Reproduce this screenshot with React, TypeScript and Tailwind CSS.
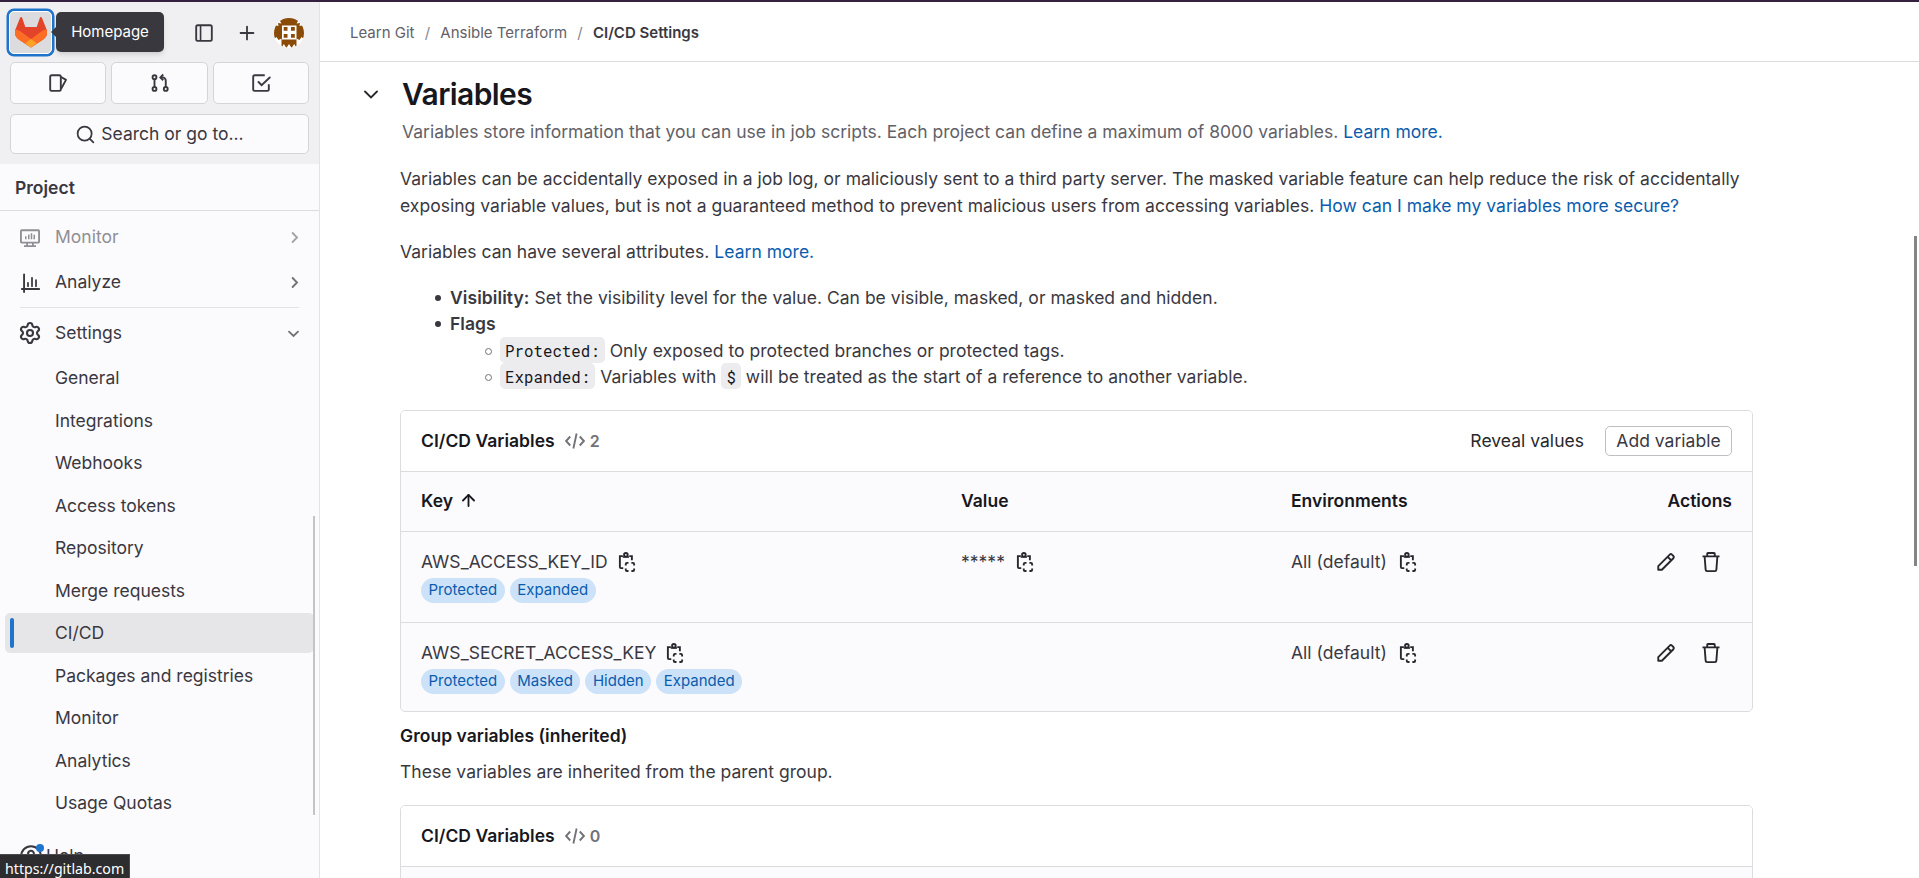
import React from "react";
import { ArrowUp, Plus, Search, Settings } from "lucide-react";

type IconProps = { className?: string; size?: number; children?: React.ReactNode };

function Icon({ className = "", size = 20, children }: IconProps) {
  return (
    <svg
      width={size}
      height={size}
      viewBox="0 0 16 16"
      fill="none"
      stroke="currentColor"
      strokeWidth="1.5"
      className={`block shrink-0 ${className}`}
    >
      {children}
    </svg>
  );
}

const ChevronDown = ({ className, size }: IconProps) => (
  <Icon className={className} size={size}>
    <path d="M3.2 6 8 10.7 12.8 6" strokeLinecap="round" />
  </Icon>
);

const SmallChevronDown = ({ className }: IconProps) => (
  <Icon className={className} size={15}>
    <path d="M3.2 6 8 10.7 12.8 6" strokeLinecap="round" strokeWidth="2" />
  </Icon>
);

const SmallChevronRight = ({ className }: IconProps) => (
  <Icon className={className} size={15}>
    <path d="M6 3.2 10.7 8 6 12.8" strokeLinecap="round" strokeWidth="2" />
  </Icon>
);

const SidebarIcon = () => (
  <Icon>
    <rect x="1.75" y="1.75" width="12.5" height="12.5" rx="1.25" />
    <path d="M5.25 2v12" strokeWidth="1.3" />
  </Icon>
);

const IssuesIcon = () => (
  <Icon>
    <rect x="1.75" y="1.75" width="8.5" height="12.5" rx="1.25" />
    <path d="M10.5 3.2 14.4 5.5 10.5 12.6" strokeLinejoin="round" />
  </Icon>
);

const MergeRequestIcon = () => (
  <Icon className="ml-[2px]">
    <circle cx="3.6" cy="3.3" r="1.55" />
    <circle cx="3.6" cy="12.7" r="1.55" />
    <circle cx="12.6" cy="12.7" r="1.55" />
    <path d="M3.6 5v6M12.6 11V6a2.5 2.5 0 0 0-2.5-2.5H8.8" />
    <path d="M10.6 1.2 8.3 3.5l2.3 2.3" />
  </Icon>
);

const TodoIcon = () => (
  <Icon>
    <path d="M11 1.75H3A1.25 1.25 0 0 0 1.75 3v10c0 .7.56 1.25 1.25 1.25h10c.7 0 1.25-.56 1.25-1.25V9" />
    <path d="m6 7.2 2.5 2.6L15 3.6" strokeLinecap="round" />
  </Icon>
);

const MonitorIcon = () => (
  <Icon>
    <rect x="0.75" y="1.75" width="14.5" height="9.9" rx="0.6" />
    <path d="M5.7 11.5v3M10.3 11.5v3M3.2 14.4h9.6" strokeWidth="1.4" />
    <path d="M4.6 6.6V9M7 5.2V9M9.2 4.2V9M11.4 5.4V9" strokeWidth="1.2" />
  </Icon>
);

const ChartIcon = () => (
  <Icon>
    <path d="M3.25 1.2v14M1.5 12.8h13.8" strokeLinecap="round" />
    <path d="M6.4 7.8v2.7M9.6 3.8v6.7M12.8 5.6v4.9" strokeLinecap="round" strokeWidth="1.4" />
  </Icon>
);

const CopyIcon = () => (
  <Icon className="relative -top-px text-[#28272d]">
    <path d="M5 12.9H3.2a.9.9 0 0 1-.9-.9V3.3h2.4M9.800 3.300h2.100V6.500" />
    <circle cx="7.1" cy="2.2" r="1.45" />
    <path d="M4.6 4h5" strokeWidth="1.3" />
    <path d="M9.200 8.700H8A1 1 0 0 0 7 9.700v1.100M11.500 8.700h1.200a1 1 0 0 1 1 1v1.100M7 13.100v1.100a1 1 0 0 0 1 1h1.200M11.500 15.200h1.200a1 1 0 0 0 1-1v-1.100" />
  </Icon>
);

const PencilIcon = () => (
  <Icon className="relative -top-px">
    <path
      d="M1.8 14.2v-2.9L11 2.1a1.3 1.3 0 0 1 1.8 0l1.1 1.1a1.3 1.3 0 0 1 0 1.8l-9.2 9.2zM9.4 3.9l2.7 2.7"
      strokeLinejoin="round"
    />
  </Icon>
);

const TrashIcon = () => (
  <Icon className="relative -top-px">
    <path d="M1.2 3.5h13.6M5 3.3V1.4c0-.4.2-.65.6-.65h4.8c.4 0 .6.25.6.65v1.9M2.9 3.6l.8 10.5c.05.7.5 1.15 1.2 1.15h6.2c.7 0 1.15-.45 1.2-1.15l.8-10.5" />
  </Icon>
);

const CodeIcon = () => (
  <Icon className="text-[#737278]">
    <path d="M4.2 4.4.9 8l3.3 3.6M11.8 4.4 15.1 8l-3.3 3.6M9.3 2 6.7 14" />
  </Icon>
);

const HelpIcon = () => (
  <Icon size={22}>
    <circle cx="8" cy="8" r="7.1" />
    <path d="M5.9 6.5A2.1 2.1 0 1 1 8 8.4v1.2" strokeLinecap="round" />
  </Icon>
);

function Tanuki() {
  return (
    <svg width="32" height="31" viewBox="0 0 32 31" className="block">
      <path
        d="M31.5 12.2 26.9.8a1.1 1.1 0 0 0-2.1.1L21.7 10H10.3L7.2.9A1.1 1.1 0 0 0 5.1.8L.5 12.2a8.6 8.6 0 0 0 2.9 10L16 30.5l12.6-8.3a8.6 8.6 0 0 0 2.9-10z"
        fill="#e24329"
      />
      <path
        d="M31.5 12.2a13 13 0 0 0-5.6 2.5L16 22.1l-9.9-7.4a13 13 0 0 0-5.6-2.5 8.6 8.6 0 0 0 2.9 10L16 30.5l12.6-8.3a8.6 8.6 0 0 0 2.9-10z"
        fill="#fc6d26"
      />
      <path d="m16 22.1-5.6 4.2 5.6 4.2 5.6-4.2z" fill="#fca326" />
    </svg>
  );
}

function Avatar() {
  return (
    <svg width="30" height="30" viewBox="0 0 30 30" className="block shrink-0">
      <clipPath id="avatar-clip">
        <circle cx="15" cy="15" r="15" />
      </clipPath>
      <g clipPath="url(#avatar-clip)">
        <rect width="30" height="30" fill="#fff" />
        <path
          d="M6 0h18v3l-1.500 2.500 3.500-.5-.5 3L30 7v14l-2.500-2-2 3-3-1.500V30l-2.300-4-2.600 4-2.600-4-2.600 4-2.600-4L7.500 30v-9.500l-3 1.500-2-3L0 21V7l4.500 1L4 5l3.500.5L6 3z"
          fill="#8a4b08"
        />
        <rect x="8" y="7.5" width="14.5" height="14" fill="#fff" />
        <path d="M9.7 9h3.8v3.8H9.7zM17 9h3.8v3.8H17zM9.7 16h3.8v3.8H9.7zM17 16h3.8v3.8H17z" fill="#8a4b08" />
      </g>
    </svg>
  );
}

const settingsItems = [
  "General",
  "Integrations",
  "Webhooks",
  "Access tokens",
  "Repository",
  "Merge requests",
  "CI/CD",
  "Packages and registries",
  "Monitor",
  "Analytics",
  "Usage Quotas",
];

const shortcutClass =
  "flex flex-1 items-center justify-center rounded-[5px] border border-[#d5d5d9] bg-[#fbfafd]";

function Sidebar() {
  return (
    <aside className="relative flex w-[320px] shrink-0 flex-col border-r border-[#e3e3e6] bg-[#fbfafd] text-[#3a383f]">
      <div className="h-[162px] shrink-0 bg-[#f0f0f3]">
        <div className="flex h-[60px] items-center pl-[9px] pr-[15px]">
          <div className="relative flex h-[43px] w-[43px] items-center justify-center rounded-[5px] border border-white bg-[#dcdcde] ring-[2.5px] ring-[#1f75cb]">
            <Tanuki />
            <div className="absolute left-[46px] top-0 z-10 flex h-10 w-[108px] items-center justify-center rounded-[5px] bg-[#3a383f] pt-px text-[15px] text-white shadow-md">
              <span className="absolute -left-[5px] top-[15px] border-y-[5px] border-r-[5px] border-y-transparent border-r-[#3a383f]" />
              Homepage
            </div>
          </div>
          <div className="ml-auto flex items-center pt-[1px]">
            <SidebarIcon />
            <Plus size={22} strokeWidth={2} className="ml-[22px] mr-[16px]" />
            <Avatar />
          </div>
        </div>
        <div className="flex h-[42px] gap-[5px] pl-[10px] pr-[10px]">
          <div className={shortcutClass}>
            <IssuesIcon />
          </div>
          <div className={shortcutClass}>
            <MergeRequestIcon />
          </div>
          <div className={shortcutClass}>
            <TodoIcon />
          </div>
        </div>
        <div className="mx-[10px] mt-[10px] flex h-10 items-center justify-center gap-[5px] rounded-[5px] border border-[#d5d5d9] bg-[#fbfafd] text-[17.5px]">
          <Search size={21} strokeWidth={2} />
          Search or go to...
        </div>
      </div>
      <div className="flex h-[47px] shrink-0 items-center border-b border-[#dcdcde] pl-[15px] pt-[2px] text-[17.5px] font-semibold">
        Project
      </div>
      <div className="mt-[4px] flex h-[45px] shrink-0 items-center pl-5 pr-[17px] text-[17.5px] text-[#908f95]">
        <MonitorIcon />
        <span className="ml-[15px] flex-1">Monitor</span>
        <SmallChevronRight className="text-[#a4a3a8]" />
      </div>
      <div className="flex h-[45px] shrink-0 items-center pl-5 pr-[17px] text-[17.5px]">
        <ChartIcon />
        <span className="ml-[15px] flex-1">Analyze</span>
        <SmallChevronRight className="text-[#737278]" />
      </div>
      <div className="ml-5 mr-5 mt-[2px] h-px shrink-0 bg-[#e3e3e6]" />
      <div className="mt-[3px] flex h-[45px] shrink-0 items-center pl-[18px] pr-[18px] text-[17.5px]">
        <Settings size={24} strokeWidth={2.1} className="relative -top-px" />
        <span className="ml-[13px] flex-1">Settings</span>
        <SmallChevronDown className="text-[#737278]" />
      </div>
      <ul className="flex shrink-0 flex-col gap-[2.5px] pl-[5px] pr-[5px] pt-[2.4px] text-[17.5px]">
        {settingsItems.map((item) => (
          <li
            key={item}
            className={`flex h-10 items-center rounded-[5px] ${item === "CI/CD" ? "bg-[#e6e6e9] pl-[5px]" : "pl-[50px]"}`}
          >
            {item === "CI/CD" && <span className="mr-[41px] h-[30px] w-1 rounded-full bg-[#1f75cb]" />}
            {item}
          </li>
        ))}
      </ul>
      <div className="mt-[13px] flex h-[40px] shrink-0 items-center pl-5 text-[17.5px]">
        <span className="relative">
          <HelpIcon />
          <span className="absolute -right-[2px] -top-px h-[8px] w-[8px] rounded-full bg-[#1f75cb]" />
        </span>
        <span className="ml-[4px]">Help</span>
      </div>
      <div className="absolute left-[313px] top-[514px] h-[299px] w-[2px] bg-[#c4c4c8]" />
      <div className="absolute bottom-0 left-0 flex h-6 w-[130px] items-center border-t border-r border-[#4a4a4e] bg-[#2d2d30] pl-[5px] pt-[4px] font-['Noto_Sans',sans-serif] text-[14.2px] text-white">
        https://gitlab.com
      </div>
    </aside>
  );
}

const Link = ({ children }: { children: React.ReactNode }) => <a className="text-[#0b5cad]">{children}</a>;

const Code = ({ children }: { children: React.ReactNode }) => (
  <code className="rounded-[5px] bg-[#ececef] px-[5px] py-[2.5px] font-['Roboto_Mono','DejaVu_Sans_Mono',monospace] text-[15.75px] leading-none text-[#18171d]">
    {children}
  </code>
);

const Disc = () => (
  <span className="-ml-[15px] mr-[9px] inline-block h-[6px] w-[6px] rounded-full bg-[#3a383f] align-[3px]" />
);

const Circle = () => (
  <span className="-ml-[15px] mr-[8px] inline-block h-[7px] w-[7px] rounded-full border border-[#737278] align-[2px]" />
);

const Badge = ({ children }: { children: React.ReactNode }) => (
  <span className="flex h-[25px] items-center rounded-full bg-[#cbe2f9] px-[7.5px] pt-px text-[15px] tracking-normal text-[#0b5cad]">
    {children}
  </span>
);

const variables = [
  { key: "AWS_ACCESS_KEY_ID", value: "*****", badges: ["Protected", "Expanded"], height: "h-[91px]" },
  {
    key: "AWS_SECRET_ACCESS_KEY",
    value: "",
    badges: ["Protected", "Masked", "Hidden", "Expanded"],
    height: "h-[88px]",
  },
];

const rowGrid = "grid grid-cols-[540px_330px_336px_1fr] pl-5 pr-[20px]";

function CardHeader({ count, children }: { count: number; children?: React.ReactNode }) {
  return (
    <div className="flex h-[61px] items-center border-b border-[#dcdcde] bg-white pl-5 pr-5">
      <h3 className="font-semibold text-[#18171d]">CI/CD Variables</h3>
      <span className="ml-[10px] flex items-center gap-[5px] font-semibold text-[#737278]">
        <CodeIcon />
        <span className="text-[16px]">{count}</span>
      </span>
      {children}
    </div>
  );
}

function VariablesTable() {
  return (
    <div className="mt-[20px] shrink-0 overflow-hidden rounded-[5px] border border-[#dcdcde] bg-[#fbfafd]">
      <CardHeader count={2}>
        <span className="ml-auto text-[#28272d]">Reveal values</span>
        <span className="ml-[21px] flex h-[30px] w-[127px] items-center justify-center rounded-[5px] border border-[#bfbfc3] text-[#3a383f]">
          Add variable
        </span>
      </CardHeader>
      <div className={`${rowGrid} h-[60px] items-center border-b border-[#dcdcde] font-semibold text-[#18171d]`}>
        <span className="flex items-center gap-[6px]">
          Key <ArrowUp size={19} strokeWidth={2.3} className="relative -top-px" />
        </span>
        <span>Value</span>
        <span>Environments</span>
        <span className="text-right">Actions</span>
      </div>
      {variables.map((v) => (
        <div key={v.key} className={`${rowGrid} ${v.height} border-b border-[#dcdcde] pt-[17px] last:border-b-0`}>
          <div>
            <div className="flex h-[27px] items-center gap-[9px]">
              {v.key} <CopyIcon />
            </div>
            <div className="mt-[1.5px] flex gap-[5px]">
              {v.badges.map((b) => (
                <Badge key={b}>{b}</Badge>
              ))}
            </div>
          </div>
          <div className="flex h-[27px] items-center gap-[10px]">
            {v.value && (
              <>
                {v.value} <CopyIcon />
              </>
            )}
          </div>
          <div className="flex h-[27px] items-center gap-[11px]">
            All (default) <CopyIcon />
          </div>
          <div className="flex h-[27px] items-center justify-end gap-[25px] pr-[11px] text-[#28272d]">
            <PencilIcon />
            <TrashIcon />
          </div>
        </div>
      ))}
    </div>
  );
}

export default function App() {
  return (
    <div className="flex h-[878px] flex-col overflow-hidden bg-white font-['Inter',sans-serif] text-[17.5px]">
      <div className="h-[2px] shrink-0 bg-[#35213f]" />
      <div className="flex min-h-0 flex-1">
        <Sidebar />
        <div className="flex min-w-0 flex-1 flex-col">
          <header className="flex h-[60px] shrink-0 items-center gap-[10.2px] border-b border-[#dcdcde] pl-[30px] pt-[3px] text-[15px] text-[#626168]">
            <span>Learn Git</span>
            <span className="text-[#89888d]">/</span>
            <span>Ansible Terraform</span>
            <span className="text-[#89888d]">/</span>
            <span className="font-semibold text-[#3a383f]">CI/CD Settings</span>
          </header>
          <div className="flex min-h-0 flex-1">
            <main className="flex w-[1433px] shrink-0 flex-col pl-20 tracking-[0.024px] text-[#3a383f]">
              <div className="-ml-[39px] mt-[13px] flex h-[38px] shrink-0 items-center">
                <ChevronDown className="text-[#28272d]" />
                <h2 className="ml-[21px] text-[30px] font-semibold tracking-[-0.02em] text-[#18171d]">Variables</h2>
              </div>
              <p className="ml-[2px] mt-[5px] leading-[27px] tracking-[0.01px] text-[#626168]">
                Variables store information that you can use in job scripts. Each project can define a maximum of 8000
                variables. <Link>Learn more.</Link>
              </p>
              <p className="mt-5 leading-[27px]">
                Variables can be accidentally exposed in a job log, or maliciously sent to a third party server. The
                masked variable feature can help reduce the risk of accidentally
                <br />
                exposing variable values, but is not a guaranteed method to prevent malicious users from accessing
                variables. <Link>How can I make my variables more secure?</Link>
              </p>
              <p className="mt-[19px] leading-[27px]">
                Variables can have several attributes. <Link>Learn more.</Link>
              </p>
              <ul className="mt-[20px] shrink-0 pl-[50px] leading-[26.25px]">
                <li>
                  <Disc />
                  <strong className="font-semibold tracking-[0.08px]">Visibility:</strong> Set the visibility level for
                  the value. Can be visible, masked, or masked and hidden.
                </li>
                <li>
                  <Disc />
                  <strong className="font-semibold">Flags</strong>
                  <ul className="pl-[50px]">
                    <li>
                      <Circle />
                      <Code>Protected:</Code> Only exposed to protected branches or protected tags.
                    </li>
                    <li>
                      <Circle />
                      <Code>Expanded:</Code> Variables with <Code>$</Code> will be treated as the start of a reference
                      to another variable.
                    </li>
                  </ul>
                </li>
              </ul>
              <VariablesTable />
              <h3 className="mt-[10px] leading-[27px] font-semibold text-[#18171d]">Group variables (inherited)</h3>
              <p className="mt-[9px] leading-[27px]">These variables are inherited from the parent group.</p>
              <div className="mt-5 h-[120px] shrink-0 overflow-hidden rounded-t-[5px] border border-[#dcdcde] bg-[#fbfafd]">
                <CardHeader count={0} />
              </div>
            </main>
            <div className="ml-auto mt-[174px] h-[330px] w-[5px] border-r-2 border-white bg-[#858585]" />
          </div>
        </div>
      </div>
    </div>
  );
}
